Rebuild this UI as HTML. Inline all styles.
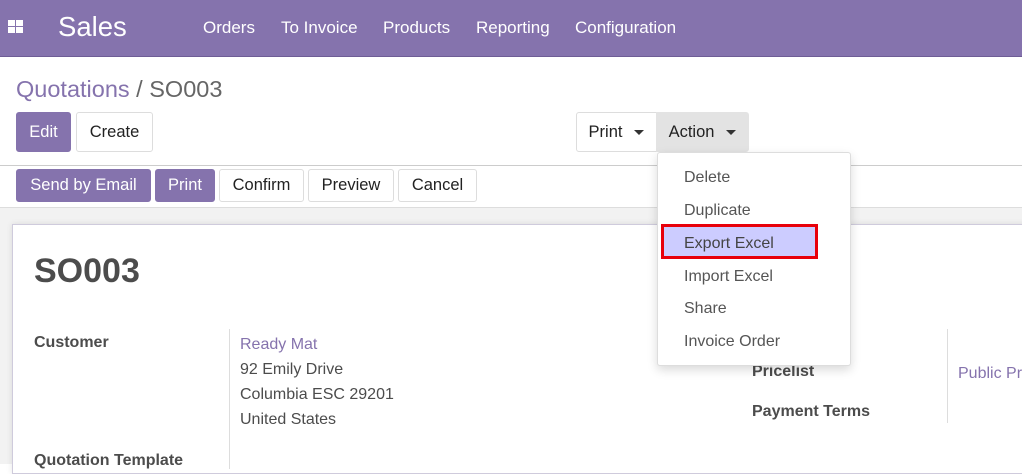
<!DOCTYPE html>
<html><head><style>
*{box-sizing:border-box;margin:0;padding:0}
body{width:1022px;height:464px;overflow:hidden;font-family:"Liberation Sans",sans-serif;background:#fff;position:relative;color:#4c4c4c}
.abs{position:absolute}
.nav{left:0;top:0;width:1022px;height:57px;background:#8573ad;border-bottom:1px solid #6e5d95}
.nav span{position:absolute;color:#fff;font-size:17px;top:18px}
.btn{position:absolute;height:40px;border:1px solid #ddd;border-radius:3px;font-size:16.5px;display:flex;align-items:center;justify-content:center;color:#222;background:#fff;white-space:nowrap}
.pri{background:#8573ad;color:#fff;border-color:#8573ad}
.b2{height:33px}
.car{display:inline-block;width:0;height:0;border-left:5px solid transparent;border-right:5px solid transparent;border-top:5px solid #333;margin-left:12px;vertical-align:middle}
.dd{left:657px;top:152px;width:194px;height:214px;background:#fff;border:1px solid #ddd;border-radius:3px;box-shadow:0 4px 10px rgba(0,0,0,.15)}
.it{position:absolute;left:26px;font-size:16px;color:#555;top:1px}
.lbl{position:absolute;font-weight:bold;font-size:16px;color:#4c4c4c;white-space:nowrap}
.val{position:absolute;font-size:16px;color:#4c4c4c;white-space:nowrap}
</style></head><body>
<div class="abs nav">
<svg class="abs" style="left:8px;top:19px" width="16" height="16"><rect x="0" y="1" width="7" height="6" fill="#fff"/><rect x="8" y="1" width="7" height="6" fill="#fff"/><rect x="0" y="8" width="7" height="6" fill="#fff"/><rect x="8" y="8" width="7" height="6" fill="#fff"/></svg>
<span style="left:58px;top:11px;font-size:27.5px">Sales</span>
<span style="left:203px">Orders</span>
<span style="left:281px">To Invoice</span>
<span style="left:383px">Products</span>
<span style="left:476px">Reporting</span>
<span style="left:575px">Configuration</span>
</div>
<div class="abs" style="left:16px;top:76px;font-size:23.5px;color:#666;white-space:nowrap"><span style="color:#8573ad">Quotations</span> / SO003</div>
<div class="btn pri" style="left:16px;top:112px;width:55px">Edit</div>
<div class="btn" style="left:76px;top:112px;width:77px">Create</div>
<div class="btn" style="left:576px;top:112px;width:81px;border-radius:3px 0 0 3px">Print<span class="car"></span></div>
<div class="btn" style="left:656px;top:112px;width:93px;background:#e3e3e3;border-color:#e3e3e3;border-radius:0 3px 3px 0">Action<span class="car"></span></div>
<div class="abs" style="left:0;top:165px;width:1022px;height:1px;background:#ccc"></div>
<div class="btn pri b2" style="left:16px;top:169px;width:135px">Send by Email</div>
<div class="btn pri b2" style="left:155px;top:169px;width:60px">Print</div>
<div class="btn b2" style="left:219px;top:169px;width:85px">Confirm</div>
<div class="btn b2" style="left:308px;top:169px;width:86px">Preview</div>
<div class="btn b2" style="left:398px;top:169px;width:79px">Cancel</div>
<div class="abs" style="left:0;top:207px;width:1022px;height:257px;background:#f2f2f2;border-top:1px solid #ddd"></div>
<div class="abs" style="left:12px;top:224px;width:1020px;height:250px;background:#fff;border:1px solid #cfcbdc;box-shadow:0 0 6px rgba(0,0,0,.1)"></div>
<div class="abs" style="left:34px;top:252px;font-size:34px;font-weight:bold;color:#4c4c4c">SO003</div>
<div class="lbl" style="left:34px;top:334px">Customer</div>
<div class="lbl" style="left:34px;top:452px">Quotation Template</div>
<div class="abs" style="left:229px;top:329px;width:1px;height:140px;background:#ddd"></div>
<div class="val" style="left:240px;top:336px;color:#8573ad">Ready Mat</div>
<div class="val" style="left:240px;top:361px">92 Emily Drive</div>
<div class="val" style="left:240px;top:386px">Columbia ESC 29201</div>
<div class="val" style="left:240px;top:411px">United States</div>
<div class="lbl" style="left:752px;top:363px">Pricelist</div>
<div class="lbl" style="left:752px;top:403px">Payment Terms</div>
<div class="abs" style="left:947px;top:329px;width:1px;height:94px;background:#ddd"></div>
<div class="val" style="left:958px;top:365px;color:#8573ad">Public Pricelist</div>
<div class="abs dd">
<div class="it" style="top:16px">Delete</div>
<div class="it" style="top:49px">Duplicate</div>
<div class="abs" style="left:3px;top:71px;width:157px;height:35px;background:#ccccff;border:3px solid #e8000b"></div>
<div class="it" style="top:82px;color:#444">Export Excel</div>
<div class="it" style="top:115px">Import Excel</div>
<div class="it" style="top:147px">Share</div>
<div class="it" style="top:180px">Invoice Order</div>
</div>
</body></html>
